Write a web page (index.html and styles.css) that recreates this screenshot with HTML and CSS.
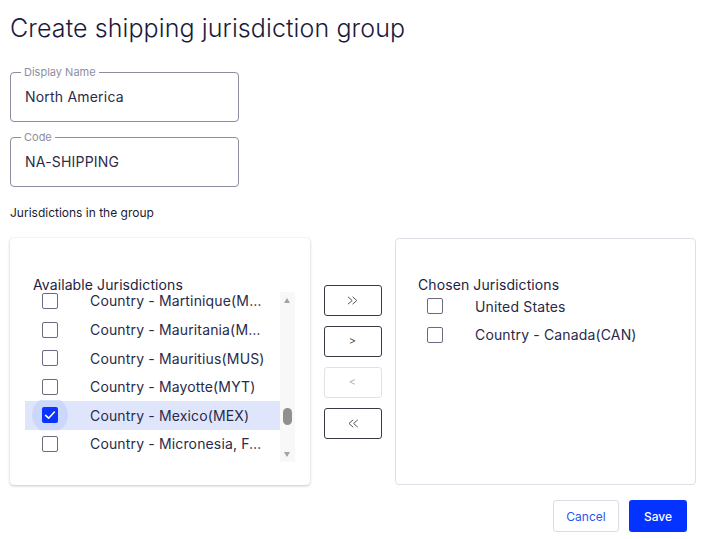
FILE: index.html
```html
<!DOCTYPE html>
<html>
<head>
<meta charset="utf-8">
<link rel="stylesheet" href="styles.css">
</head>
<body>
<h1 class="title">Create shipping jurisdiction group</h1>
<fieldset class="field field-first">
  <legend class="field-label">Display Name</legend>
  <div class="field-value">North America</div>
</fieldset>
<fieldset class="field">
  <legend class="field-label">Code</legend>
  <div class="field-value">NA-SHIPPING</div>
</fieldset>
<div class="section-label">Jurisdictions in the group</div>
<div class="transfer">
  <div class="panel panel-left">
    <div class="panel-title">Available Jurisdictions</div>
    <div class="list-wrap">
      <div class="list">
        <div class="list-inner scrolled">
          <div class="row"><span class="cb"></span><span class="row-text">Country - Martinique(MTQ)</span></div>
          <div class="row"><span class="cb"></span><span class="row-text">Country - Mauritania(MRT)</span></div>
          <div class="row"><span class="cb"></span><span class="row-text">Country - Mauritius(MUS)</span></div>
          <div class="row"><span class="cb"></span><span class="row-text">Country - Mayotte(MYT)</span></div>
          <div class="row row-selected"><span class="cb-halo"><span class="cb cb-checked"><svg viewBox="0 0 16 16" width="16" height="16"><path d="M3.6 8.4 L6.6 11.2 L12.4 5" fill="none" stroke="#fff" stroke-width="1.6" stroke-linecap="round" stroke-linejoin="round"/></svg></span></span><span class="row-text">Country - Mexico(MEX)</span></div>
          <div class="row"><span class="cb"></span><span class="row-text">Country - Micronesia, Federated States of(FSM)</span></div>
        </div>
      </div>
      <div class="scrollbar">
        <span class="arrow-up"></span>
        <span class="thumb"></span>
        <span class="arrow-down"></span>
      </div>
    </div>
  </div>
  <div class="actions">
    <button class="move-btn" aria-label="Move all right"><svg class="chev" viewBox="0 0 12 9" width="12" height="9"><path d="M1 0.8 L5.2 4.5 L1 8.2 M5.6 0.8 L9.8 4.5 L5.6 8.2" fill="none" stroke="#555" stroke-width="1"/></svg></button>
    <button class="move-btn">&gt;</button>
    <button class="move-btn move-btn-disabled">&lt;</button>
    <button class="move-btn" aria-label="Move all left"><svg class="chev" viewBox="0 0 12 9" width="12" height="9"><path d="M6.2 0.8 L2 4.5 L6.2 8.2 M10.8 0.8 L6.6 4.5 L10.8 8.2" fill="none" stroke="#555" stroke-width="1"/></svg></button>
  </div>
  <div class="panel panel-right">
    <div class="panel-title">Chosen Jurisdictions</div>
    <div class="list-inner">
      <div class="row"><span class="cb"></span><span class="row-text">United States</span></div>
      <div class="row"><span class="cb"></span><span class="row-text">Country - Canada(CAN)</span></div>
    </div>
  </div>
</div>
<div class="footer">
  <button class="btn btn-cancel">Cancel</button>
  <button class="btn btn-save">Save</button>
</div>
</body>
</html>
```
FILE: styles.css
```css
* { box-sizing: border-box; }
html, body { margin: 0; background: #fff; }
body {
  padding: 0 10px;
  font-family: Inter, "Noto Sans", sans-serif;
  color: #1d1d3f;
  width: 706px;
}
.title {
  margin: 13px 0 0;
  font-size: 25px;
  line-height: 30px;
  font-weight: 300;
  color: #1b1b3d;
  letter-spacing: 0.1px;
}
.field {
  margin: 23px 0 0;
  width: 229px;
  height: 56px;
  padding: 0 10px;
  border: 1px solid #8e8c9e;
  border-radius: 4px;
  min-width: 0;
}
.field + .field { margin-top: 9px; }
.field-label {
  padding: 0 3px;
  font-size: 11px;
  line-height: 12px;
  color: #8f8ea0;
}
.field-value {
  padding-left: 4px;
  height: 43px;
  line-height: 37px;
  font-size: 14px;
  color: #2c2c4a;
  letter-spacing: 0.2px;
}
.section-label {
  margin-top: 18px;
  font-size: 12px;
  line-height: 15px;
  color: #1a1a2e;
}
.transfer {
  margin-top: 18px;
  display: flex;
  height: 247px;
}
.panel {
  border-radius: 4px;
  background: #fff;
  padding-top: 38px;
}
.panel-left {
  width: 300px;
  box-shadow: 0 1px 3px rgba(0,0,0,0.22), 0 0 1px rgba(0,0,0,0.12);
  padding-left: 15px;
}
.panel-right {
  width: 301px;
  border: 1px solid #dedee6;
  padding-left: 14px;
  padding-top: 37px;
}
.panel-title {
  margin-left: 8px;
  font-size: 14px;
  line-height: 17px;
  height: 16px;
  color: #1d1d3f;
  letter-spacing: 0.1px;
}
.list-wrap {
  display: flex;
  height: 170px;
}
.list {
  width: 255px;
  overflow: hidden;
}
.list-inner.scrolled { margin-top: -5.4px; }
.row {
  height: 28.6px;
  display: flex;
  align-items: center;
  padding-left: 17px;
}
.row-selected { background: #dfe6fc; }
.cb {
  flex: none;
  width: 16px;
  height: 16px;
  border: 1.5px solid #6b6a80;
  border-radius: 2px;
  background: #fff;
  display: block;
}
.cb-halo {
  flex: none;
  width: 16px;
  height: 16px;
  position: relative;
  display: block;
}
.cb-halo::before {
  content: "";
  position: absolute;
  left: -10px;
  top: -10px;
  width: 36px;
  height: 36px;
  border-radius: 50%;
  background: #cbd7fb;
  clip-path: inset(3px 0 3px 0);
}
.cb-checked {
  position: relative;
  border: none;
  background: #0a33ff;
}
.cb-checked svg { display: block; }
.row-text {
  margin-left: 32px;
  font-size: 14px;
  color: #2a2a4a;
  letter-spacing: 0.15px;
  white-space: nowrap;
  overflow: hidden;
  text-overflow: ellipsis;
  max-width: 177px;
}
.panel-right .row-text { max-width: 240px; }
.scrollbar {
  width: 15px;
  background: #f8f8f8;
  position: relative;
}
.arrow-up, .arrow-down {
  position: absolute;
  left: 4px;
  width: 0;
  height: 0;
  border-left: 3.5px solid transparent;
  border-right: 3.5px solid transparent;
}
.arrow-up { top: 6px; border-bottom: 5px solid #a3a3a3; }
.arrow-down { bottom: 5px; border-top: 5px solid #a3a3a3; }
.thumb {
  position: absolute;
  left: 3px;
  top: 116px;
  width: 9px;
  height: 17px;
  border-radius: 4.5px;
  background: #8f8f8f;
}
.actions {
  width: 85px;
  display: flex;
  flex-direction: column;
  align-items: center;
  justify-content: center;
  gap: 10px;
}
.move-btn {
  width: 58px;
  height: 31px;
  border: 1px solid #3a3a44;
  border-radius: 3px;
  background: #fff;
  font-family: Inter, sans-serif;
  font-size: 11px;
  color: #555;
  padding: 0;
  display: flex;
  align-items: center;
  justify-content: center;
}
.chev { display: block; }
.move-btn-disabled {
  border-color: #e2e2e6;
  color: #b5b5b5;
}
.footer {
  margin-top: 15px;
  display: flex;
  justify-content: flex-end;
  gap: 10px;
  padding-right: 9px;
}
.btn {
  height: 32px;
  border-radius: 3px;
  font-family: Inter, sans-serif;
  font-size: 12px;
  padding: 0;
}
.btn-cancel {
  width: 66px;
  border: 1px solid #dcdce4;
  background: #fff;
  color: #2c56f0;
}
.btn-save {
  width: 58px;
  border: none;
  background: #0433ff;
  color: #fff;
  font-weight: 500;
}
```
